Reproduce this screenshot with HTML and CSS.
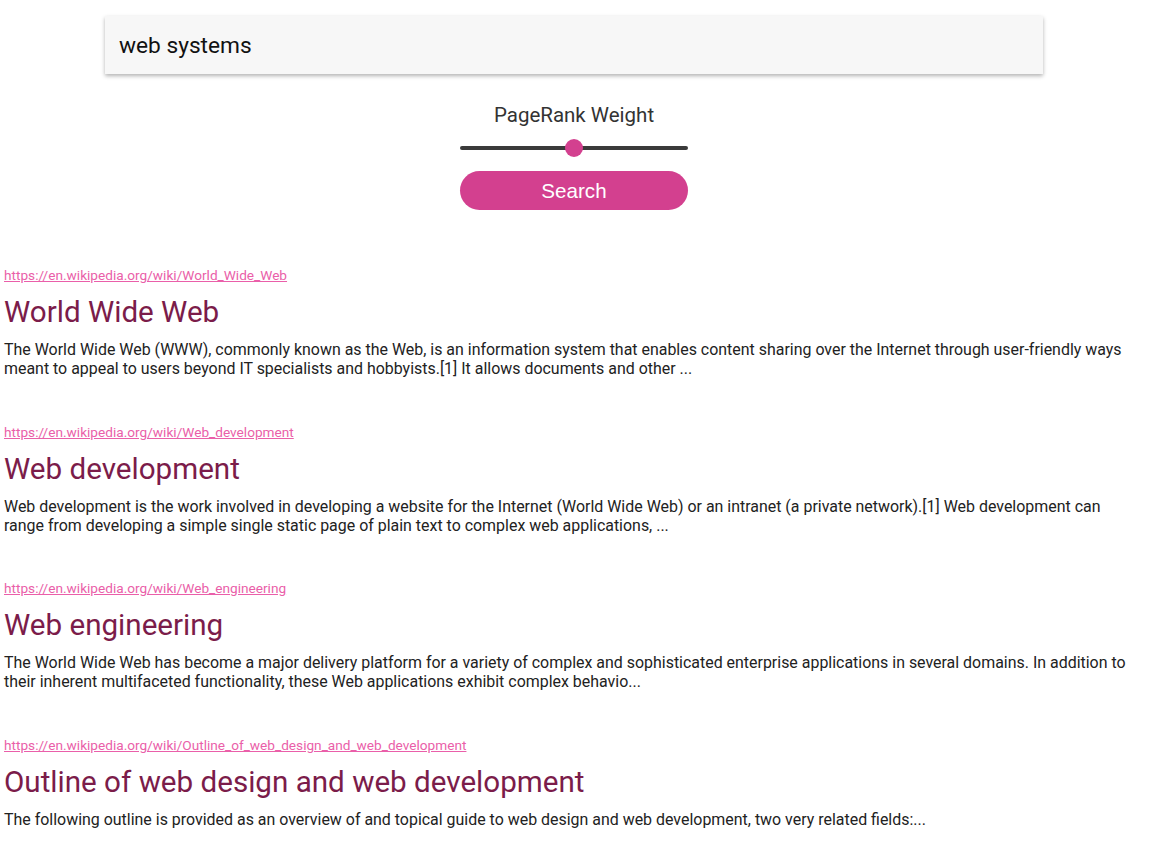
FILE: index.html
```html
<!DOCTYPE html>
<html lang="en">
<head>
  <meta charset="UTF-8">
  <meta name="viewport" content="width=device-width, initial-scale=1.0">
  <title>Web Search</title>
  <link rel="stylesheet" href="styles.css">
</head>
<body>

  <div class="page">
    <div class="search-panel">
      <input type="text" class="query" id="query" value="web systems">

      <div class="controls">
        <label for="weight">PageRank Weight</label>
        <input type="range" id="weight" min="0" max="1" step="0.01" value="0.5">
        <button id="search">Search</button>
      </div>
    </div>

    <div class="results">
      <div class="result">
        <a class="result-url" href="#">https://en.wikipedia.org/wiki/World_Wide_Web</a>
        <h2 class="result-title">World Wide Web</h2>
        <p class="result-summary">The World Wide Web (WWW), commonly known as the Web, is an information system that enables content sharing over the Internet through user-friendly ways meant to appeal to users beyond IT specialists and hobbyists.[1] It allows documents and other ...</p>
      </div>

      <div class="result">
        <a class="result-url" href="#">https://en.wikipedia.org/wiki/Web_development</a>
        <h2 class="result-title">Web development</h2>
        <p class="result-summary">Web development is the work involved in developing a website for the Internet (World Wide Web) or an intranet (a private network).[1] Web development can range from developing a simple single static page of plain text to complex web applications, ...</p>
      </div>

      <div class="result">
        <a class="result-url" href="#">https://en.wikipedia.org/wiki/Web_engineering</a>
        <h2 class="result-title">Web engineering</h2>
        <p class="result-summary">The World Wide Web has become a major delivery platform for a variety of complex and sophisticated enterprise applications in several domains. In addition to their inherent multifaceted functionality, these Web applications exhibit complex behavio...</p>
      </div>

      <div class="result">
        <a class="result-url" href="#">https://en.wikipedia.org/wiki/Outline_of_web_design_and_web_development</a>
        <h2 class="result-title">Outline of web design and web development</h2>
        <p class="result-summary">The following outline is provided as an overview of and topical guide to web design and web development, two very related fields:...</p>
      </div>
    </div>
  </div>

</body>
</html>
```

FILE: styles.css
```css
body {
  margin: 0;
  font-family: Roboto, "Noto Sans", sans-serif;
  background-color: white;
  color: #222;
}

.page {
  width: 1148px;
  padding-top: 16px;
}

.search-panel {
  display: flex;
  flex-direction: column;
  align-items: center;
}

.query {
  box-sizing: border-box;
  width: 938px;
  height: 58px;
  padding: 0 14px;
  border: none;
  outline: none;
  background-color: #f7f7f7;
  box-shadow: 0 2px 4px rgba(0, 0, 0, 0.3);
  font-family: Roboto, sans-serif;
  font-size: 22.7px;
  color: #111;
}

.controls {
  display: flex;
  flex-direction: column;
  align-items: center;
  width: 228px;
  margin-top: 29px;
}

.controls label {
  font-size: 20.5px;
  line-height: 24px;
  color: #333;
}

input[type="range"] {
  -webkit-appearance: none;
  appearance: none;
  width: 228px;
  height: 20px;
  margin: 11px 0 13px;
  background: transparent;
}

input[type="range"]::-webkit-slider-runnable-track {
  height: 4px;
  border-radius: 2px;
  background-color: #3a3a3a;
}

input[type="range"]::-webkit-slider-thumb {
  -webkit-appearance: none;
  width: 18px;
  height: 18px;
  margin-top: -7px;
  border-radius: 50%;
  background-color: #d3408f;
}

#search {
  width: 228px;
  height: 39px;
  border: none;
  border-radius: 20px;
  background-color: #d3408f;
  color: white;
  font-family: "Liberation Sans", Arial, sans-serif;
  font-size: 20.6px;
  cursor: pointer;
}

.results {
  padding: 57px 4px 0;
}

.result {
  margin-bottom: 45.6px;
}

.result-url {
  display: block;
  font-size: 13.65px;
  line-height: 16px;
  color: #ea5fa9;
}

.result-title {
  margin: 11px 0 10px;
  font-size: 29.6px;
  line-height: 36px;
  font-weight: normal;
  color: #7b1c4a;
}

.result-summary {
  margin: 0;
  font-size: 15.95px;
  line-height: 19px;
  color: #222;
}
```
